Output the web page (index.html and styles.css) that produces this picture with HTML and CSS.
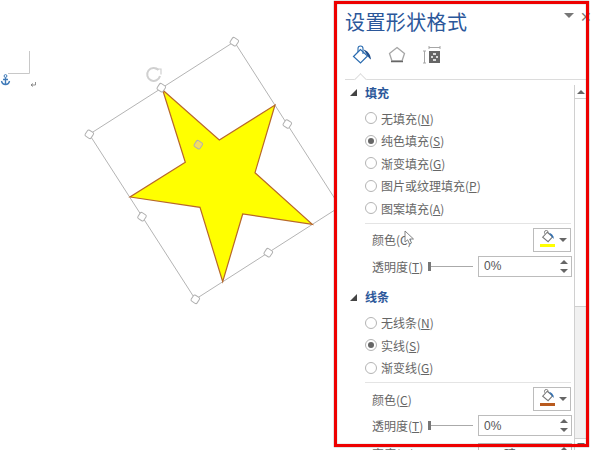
FILE: index.html
```html
<!DOCTYPE html>
<html lang="zh-CN">
<head>
    <meta charset="utf-8">
    <title>设置形状格式</title>
    <link rel="stylesheet" href="styles.css">
</head>
<body>
    <div class="page">
        <!-- document canvas -->
        <svg class="doc" viewBox="0 0 334 450" width="334" height="450">
            <path class="margin-mark" d="M29.5 51V73.5H8"/>
            <g class="anchor">
                <circle cx="5.5" cy="76" r="1.4"/>
                <path d="M5.5 77.5V84.5M3 79.5H8M1.5 81C2 83.5 3.5 84.5 5.5 84.5S9 83.5 9.5 81"/>
            </g>
            <path class="return-mark" d="M35.5 82V85H31M33 83.5L31 85L33 86.5"/>
            <polygon class="frame" points="234.3,41.7 340,206.7 195.3,299.3 89.3,134.3"/>
            <polygon class="star" points="162.7,90 219.3,140 275,105 255,172.7 312.3,224.3 242.7,214 222.7,281.7 200,207.3 130,197 185.3,162.3"/>
            <g class="rotate">
                <path d="M158.5 70A6.5 6.5 0 1 0 160 76"/>
                <path class="rotate-tip" d="M155.5 69H161V74.5"/>
            </g>
            <rect class="handle" x="-3.5" y="-3.5" width="7" height="7" rx="1.5" transform="translate(234.3 41.7) rotate(33)"/>
            <rect class="handle" x="-3.5" y="-3.5" width="7" height="7" rx="1.5" transform="translate(89.3 134.3) rotate(33)"/>
            <rect class="handle" x="-3.5" y="-3.5" width="7" height="7" rx="1.5" transform="translate(195.3 299.3) rotate(33)"/>
            <rect class="handle" x="-3.5" y="-3.5" width="7" height="7" rx="1.5" transform="translate(161.3 87.7) rotate(33)"/>
            <rect class="handle" x="-3.5" y="-3.5" width="7" height="7" rx="1.5" transform="translate(287.3 124) rotate(33)"/>
            <rect class="handle" x="-3.5" y="-3.5" width="7" height="7" rx="1.5" transform="translate(142 216.7) rotate(33)"/>
            <rect class="handle" x="-3.5" y="-3.5" width="7" height="7" rx="1.5" transform="translate(268.3 252.7) rotate(33)"/>
            <rect class="handle handle-adjust" x="-3.5" y="-3.5" width="7" height="7" rx="1.5" transform="translate(198.3 144.7) rotate(33)"/>
        </svg>

        <!-- format pane -->
        <div class="pane">
            <div class="pane-head">
                <h1 class="pane-title">设置形状格式</h1>
                <span class="pane-menu"></span>
                <span class="pane-close">✕</span>
            </div>
            <div class="tabs">
                <svg class="tab-icon" viewBox="0 0 20 20" width="20" height="20">
                    <path d="M6 7V3.5A2.5 2.5 0 0 1 11 3.5V9" fill="none" stroke="#2b6cb0" stroke-width="1.1"/>
                    <path d="M8.5 4.5L1.5 11.5L8.5 18L15.5 11Z" fill="none" stroke="#2b6cb0" stroke-width="1.2"/>
                    <path d="M11.5 4.5C15 5.5 18.5 8.5 19 14.5C17.5 13.5 16 12 14.5 9Z" fill="#1f4e8c"/>
                </svg>
                <svg class="tab-icon" viewBox="0 0 20 20" width="20" height="20">
                    <path d="M10 2.5L17.5 8.5L15 16H5L2.5 8.5Z" fill="#fff" stroke="#a6a6a6" stroke-width="1.3"/>
                    <path d="M4 16.5H16" stroke="#666" stroke-width="1.5"/>
                </svg>
                <svg class="tab-icon" viewBox="0 0 20 20" width="20" height="20">
                    <path d="M7 2.5H18M7 1V4M18 1V4M2.5 6V18M1 6H4M1 18H4" fill="none" stroke="#a6a6a6"/>
                    <rect x="7" y="6" width="11" height="12" fill="#666"/>
                    <path d="M11 9H14M9 12H11M14 12H16M11 15H14" stroke="#fff" stroke-width="1.4"/>
                </svg>
                <span class="tab-notch"></span>
            </div>
            <div class="pane-body">
                <div class="options">
                    <div class="group-title"><span class="caret"></span>填充</div>
                    <div class="radio-list">
                        <div class="radio-row"><span class="radio"></span>无填充(<u>N</u>)</div>
                        <div class="radio-row"><span class="radio radio-on"></span>纯色填充(<u>S</u>)</div>
                        <div class="radio-row"><span class="radio"></span>渐变填充(<u>G</u>)</div>
                        <div class="radio-row"><span class="radio"></span>图片或纹理填充(<u>P</u>)</div>
                        <div class="radio-row"><span class="radio"></span>图案填充(<u>A</u>)</div>
                    </div>
                    <div class="field-list">
                        <div class="field field-color">
                            <span class="field-label">颜色(C)</span>
                            <div class="color-btn">
                                <svg viewBox="0 0 20 20" width="18" height="18">
                                    <path d="M5 4V2.5A2 2 0 0 1 9 2.5V6" fill="none" stroke="#777"/>
                                    <path d="M8 2.5L3 8L9 13L14 7.5Z" fill="#fff" stroke="#777" stroke-width="1.2"/>
                                    <path d="M10 3C13 3.5 15 6 15.5 10L13 7.5Z" fill="#2b6cb0"/>
                                </svg>
                                <span class="swatch swatch-yellow"></span>
                                <span class="arrow-down"></span>
                            </div>
                        </div>
                        <div class="field">
                            <span class="field-label">透明度(<u>T</u>)</span>
                            <div class="slider"><span class="slider-thumb"></span><span class="slider-line"></span></div>
                            <div class="spin"><span>0%</span><span class="spin-btns"><span class="arrow-up"></span><span class="arrow-down"></span></span></div>
                        </div>
                    </div>

                    <div class="group-title group-line"><span class="caret"></span>线条</div>
                    <div class="radio-list">
                        <div class="radio-row"><span class="radio"></span>无线条(<u>N</u>)</div>
                        <div class="radio-row"><span class="radio radio-on"></span>实线(<u>S</u>)</div>
                        <div class="radio-row"><span class="radio"></span>渐变线(<u>G</u>)</div>
                    </div>
                    <div class="field-list">
                        <div class="field field-color">
                            <span class="field-label">颜色(<u>C</u>)</span>
                            <div class="color-btn">
                                <svg viewBox="0 0 20 20" width="18" height="18">
                                    <path d="M5 4V2.5A2 2 0 0 1 9 2.5V6" fill="none" stroke="#777"/>
                                    <path d="M8 2.5L3 8L9 13L14 7.5Z" fill="#fff" stroke="#777" stroke-width="1.2"/>
                                    <path d="M10 3C13 3.5 15 6 15.5 10L13 7.5Z" fill="#2b6cb0"/>
                                </svg>
                                <span class="swatch swatch-brown"></span>
                                <span class="arrow-down"></span>
                            </div>
                        </div>
                        <div class="field">
                            <span class="field-label">透明度(<u>T</u>)</span>
                            <div class="slider"><span class="slider-thumb"></span><span class="slider-line"></span></div>
                            <div class="spin"><span>0%</span><span class="spin-btns"><span class="arrow-up"></span><span class="arrow-down"></span></span></div>
                        </div>
                        <div class="field field-width">
                            <span class="field-label">宽度(<u>W</u>)</span>
                            <div class="slider"></div>
                            <div class="spin"><span>1.5 磅</span><span class="spin-btns"><span class="arrow-up"></span><span class="arrow-down"></span></span></div>
                        </div>
                    </div>
                </div>
                <div class="scrollbar">
                    <div class="scroll-btn"><span class="arrow-up"></span></div>
                    <div class="scroll-thumb"></div>
                    <div class="scroll-track"></div>
                    <div class="scroll-btn scroll-btn-end"><span class="arrow-down"></span></div>
                </div>
            </div>
            <svg class="cursor" viewBox="0 0 12 16" width="12" height="16">
                <path d="M1 1V12L3.6 9.8L5.5 14L7.5 13L5.7 9H9.5Z" fill="#fff" stroke="#777" stroke-width="0.9"/>
            </svg>
        </div>

        <!-- red annotation box drawn over the pane -->
        <div class="red-box"></div>
    </div>
</body>
</html>
```

FILE: styles.css
```css
* {
    box-sizing: border-box;
}

body {
    margin: 0;
    background: #fff;
    font-family: "Noto Sans CJK SC", "Liberation Sans", sans-serif;
    color: #666;
    font-size: 12px;
}

.page {
    position: relative;
    width: 600px;
    height: 450px;
    overflow: hidden;
    display: flex;
    align-items: flex-start;
}

/* document canvas */
.doc {
    flex: none;
    width: 334px;
    height: 450px;
}

.margin-mark {
    fill: none;
    stroke: #c8c8c8;
}

.anchor path {
    fill: none;
    stroke: #3f7ab8;
    stroke-width: 1.4;
}

.anchor circle {
    fill: none;
    stroke: #3f7ab8;
}

.return-mark {
    fill: none;
    stroke: #777;
    stroke-width: 0.8;
}

.frame {
    fill: none;
    stroke: #b4b4b4;
    stroke-width: 1;
}

.star {
    fill: #ffff00;
    stroke: #b8682a;
    stroke-width: 1.2;
}

.rotate path {
    fill: none;
    stroke: #d0d0d0;
    stroke-width: 2;
}

.rotate .rotate-tip {
    stroke-width: 1.2;
}

.handle {
    fill: #fff;
    stroke: #b0b0b0;
    stroke-width: 1;
}

.handle-adjust {
    fill: #f5dc60;
}

/* format pane */
.pane {
    position: relative;
    flex: none;
    width: 255px;
    height: 450px;
    padding: 0 3px;
    background: #fff;
    display: flex;
    flex-direction: column;
}

.pane-head {
    flex: none;
    height: 40px;
    padding: 4px 0 0 8px;
    display: flex;
    align-items: center;
}

.pane-title {
    margin: 0;
    font-size: 20px;
    font-weight: 400;
    color: #2b579a;
    line-height: 36px;
    letter-spacing: 0.4px;
}

.pane-menu {
    position: absolute;
    left: 230px;
    top: 13px;
    border-left: 5px solid transparent;
    border-right: 5px solid transparent;
    border-top: 5px solid #777;
}

.pane-close {
    position: absolute;
    left: 246px;
    top: 9px;
    font-size: 14px;
    line-height: 16px;
    font-family: "DejaVu Sans", sans-serif;
    color: #777;
}

.tabs {
    position: relative;
    flex: none;
    height: 40px;
    margin-left: 8px;
    padding: 5px 0 0 7px;
    border-bottom: 1px solid #dcdcdc;
    display: flex;
    gap: 15px;
    align-items: flex-start;
}

.tab-icon {
    flex: none;
}

.tab-notch {
    position: absolute;
    left: 11px;
    bottom: -5px;
    width: 9px;
    height: 9px;
    background: #fff;
    border-left: 1px solid #dcdcdc;
    border-top: 1px solid #dcdcdc;
    transform: rotate(45deg);
}

.pane-body {
    flex: 1;
    min-height: 0;
    display: flex;
    overflow: hidden;
}

.options {
    flex: 1;
    min-width: 0;
    padding-right: 3px;
}

.group-title {
    height: 24px;
    display: flex;
    align-items: center;
    padding-left: 28px;
    position: relative;
    font-weight: 700;
    color: #2b579a;
}

.group-line {
    margin-top: 8px;
}

.caret {
    position: absolute;
    left: 13px;
    top: 9px;
    border-left: 7px solid transparent;
    border-bottom: 7px solid #444;
}

.radio-list {
    padding: 3px 0 3px 28px;
}

.radio-row {
    height: 22.5px;
    display: flex;
    align-items: center;
    white-space: nowrap;
}

.radio {
    flex: none;
    width: 12px;
    height: 12px;
    margin-right: 4px;
    border: 1px solid #b4b4b4;
    border-radius: 50%;
    display: flex;
    align-items: center;
    justify-content: center;
}

.radio-on::after {
    content: "";
    width: 6px;
    height: 6px;
    border-radius: 50%;
    background: #666;
}

.field-list {
    margin-left: 28px;
    padding: 0 0 0 7px;
    border-top: 1px solid #e4e4e4;
}

.field {
    height: 21px;
    margin-top: 4px;
    display: flex;
    align-items: center;
    white-space: nowrap;
}

.field-color {
    height: 24px;
    justify-content: space-between;
}

.field-width {
    margin-top: 7px;
}

.field-label {
    width: 56px;
    flex: none;
}

.color-btn {
    position: relative;
    width: 38px;
    height: 24px;
    border: 1px solid #bcbcbc;
    padding: 1px 0 0 6px;
}

.color-btn svg {
    display: block;
}

.swatch {
    position: absolute;
    left: 6px;
    bottom: 4px;
    width: 15px;
    height: 3px;
}

.swatch-yellow {
    background: #ffff00;
}

.swatch-brown {
    background: #b85a1e;
}

.color-btn .arrow-down {
    position: absolute;
    right: 3px;
    top: 9px;
}

.arrow-down,
.arrow-up {
    display: block;
    border-left: 4px solid transparent;
    border-right: 4px solid transparent;
}

.arrow-down {
    border-top: 4px solid #666;
}

.arrow-up {
    border-bottom: 4px solid #666;
}

.slider {
    width: 50px;
    flex: none;
    display: flex;
    align-items: center;
}

.slider-thumb {
    width: 3px;
    height: 9px;
    background: #777;
}

.slider-line {
    width: 42px;
    height: 1px;
    background: #aaa;
}

.spin {
    flex: none;
    width: 94px;
    height: 21px;
    border: 1px solid #bcbcbc;
    font-family: "Liberation Sans", sans-serif;
    font-size: 12px;
    padding-left: 5px;
    display: flex;
    align-items: center;
    justify-content: space-between;
    color: #555;
}

.spin-btns {
    display: flex;
    flex-direction: column;
    gap: 5px;
    margin-right: 3px;
}

/* scrollbar */
.scrollbar {
    flex: none;
    width: 12px;
    margin-top: 5px;
    display: flex;
    flex-direction: column;
    background: #f1f1f1;
    border-left: 1px solid #d0d0d0;
}

.scroll-btn {
    flex: none;
    height: 14px;
    background: #fff;
    border-bottom: 1px solid #d0d0d0;
    display: flex;
    align-items: center;
    justify-content: center;
}

.scroll-btn-end {
    height: 12px;
    border-top: 1px solid #d0d0d0;
    border-bottom: 0;
}

.scroll-thumb {
    flex: none;
    height: 208px;
    background: #fff;
    border-bottom: 1px solid #d0d0d0;
}

.scroll-track {
    flex: 1;
}

.cursor {
    position: absolute;
    left: 70px;
    top: 230px;
}

.red-box {
    position: absolute;
    left: 334px;
    top: 1px;
    width: 255px;
    height: 446px;
    border: 3px solid #ee0000;
    box-shadow: 0 0 1px #555, inset 0 0 1px #555;
}
```
